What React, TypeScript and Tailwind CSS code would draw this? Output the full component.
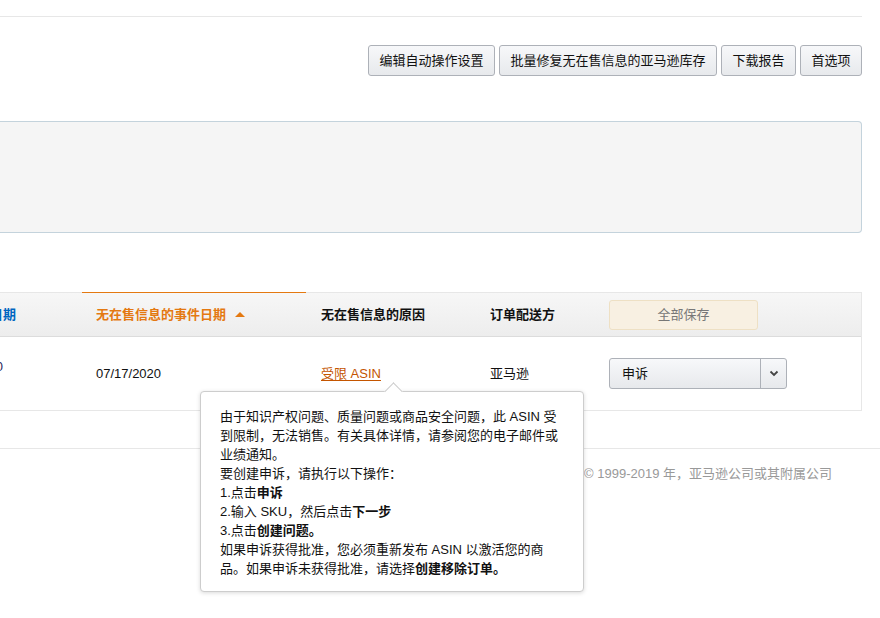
const FONT = "font-['Liberation_Sans','Noto_Sans_CJK_SC',sans-serif]";

const buttons = [
  { label: '编辑自动操作设置', w: 'w-[127px]' },
  { label: '批量修复无在售信息的亚马逊库存', w: 'w-[218px]' },
  { label: '下载报告', w: 'w-[75px]' },
  { label: '首选项', w: 'w-[62px]' },
];

function ActionButton({ label, w }: { label: string; w: string }) {
  return (
    <button className={`${w} h-[31px] rounded-[3px] border border-[#adb1b8] bg-gradient-to-b from-[#f7f8fa] to-[#e7e9ec] text-[13px] text-[#111] whitespace-nowrap`}>
      {label}
    </button>
  );
}

export default function App() {
  return (
    <div className={`relative w-[880px] h-[618px] overflow-hidden bg-white text-[13px] text-[#111] ${FONT}`}>
      <div className="w-[862px] pt-4">
        <div className="border-t border-[#e7e7e7]" />

        {/* toolbar */}
        <div className="mt-[28px] flex justify-end gap-[4px]">
          {buttons.map((b) => (
            <ActionButton key={b.label} label={b.label} w={b.w} />
          ))}
        </div>

        {/* empty filter panel */}
        <div className="mt-[45px] h-[112px] rounded-r-[4px] border border-l-0 border-[#c4d3dc] bg-[#f5f5f5]" />

        {/* table */}
        <div className="mt-[59px] border-r border-b border-[#e7e7e7]">
          <div className="flex h-[45px] border-b border-[#dcdcdc] bg-gradient-to-b from-[#f7f7f7] to-[#ededed] font-bold">
            <div className="w-[82px] shrink-0 flex items-center justify-end pr-[66px] whitespace-nowrap border-t border-[#e7e7e7] text-[#0066c0]">
              状态更改日期
            </div>
            <div className="w-[224px] shrink-0 flex items-center gap-[9px] pl-[14px] border-t border-[#e47911] text-[#e47911]">
              无在售信息的事件日期
              <span className="w-0 h-0 border-x-[5px] border-x-transparent border-b-[5px] border-b-[#e47911]" />
            </div>
            <div className="w-[169px] shrink-0 flex items-center pl-[15px] border-t border-[#e7e7e7]">
              无在售信息的原因
            </div>
            <div className="w-[120px] shrink-0 flex items-center pl-[15px] border-t border-[#e7e7e7]">
              订单配送方
            </div>
            <div className="flex-1 flex items-center pl-[14px] border-t border-[#e7e7e7]">
              <div className="w-[149px] h-[30px] flex items-center justify-center rounded-[3px] border border-[#eee0c4] bg-[#f8f0e2] font-normal text-[#777]">
                全部保存
              </div>
            </div>
          </div>

          <div className="flex h-[73px] items-center">
            <div className="w-[82px] shrink-0 flex justify-end pr-[79px] whitespace-nowrap text-[#2a1f5a] -mt-[14px]">
              1,000
            </div>
            <div className="w-[224px] shrink-0 pl-[14px]">07/17/2020</div>
            <div className="w-[169px] shrink-0 pl-[15px]">
              <span className="text-[#c45500] underline underline-offset-2">受限 ASIN</span>
            </div>
            <div className="w-[120px] shrink-0 pl-[15px]">亚马逊</div>
            <div className="flex-1 pl-[14px]">
              <div className="w-[178px] h-[31px] flex rounded-[3px] border border-[#adb1b8] bg-gradient-to-b from-[#f7f8fa] to-[#e7e9ec]">
                <div className="flex-1 flex items-center pl-[12px]">申诉</div>
                <div className="w-[26px] flex items-center justify-center border-l border-[#adb1b8]">
                  <svg width="10" height="7" viewBox="0 0 10 7">
                    <polyline points="1.5,1.5 5,5 8.5,1.5" fill="none" stroke="#444" strokeWidth="1.8" />
                  </svg>
                </div>
              </div>
            </div>
          </div>
        </div>
      </div>

      {/* footer */}
      <div className="mt-[37px] border-t border-[#e7e7e7] pt-[15px] pr-[48px] flex justify-end text-[#999]">
        © 1999-2019 年，亚马逊公司或其附属公司
      </div>

      {/* tooltip over the reason link */}
      <div className="absolute left-[200px] top-[391px] w-[384px] h-[201px] rounded-[4px] border border-[#cdcdcd] bg-white shadow-[0_1px_4px_rgba(0,0,0,0.15)] pt-[15px] pl-[19px] leading-[19px] text-[13px] text-[#111]">
        <span className="absolute -top-[7px] left-[186px] w-[13px] h-[13px] rotate-45 bg-white border-l border-t border-[#cdcdcd]" />
        <div>由于知识产权问题、质量问题或商品安全问题，此 ASIN 受</div>
        <div>到限制，无法销售。有关具体详情，请参阅您的电子邮件或</div>
        <div>业绩通知。</div>
        <div>要创建申诉，请执行以下操作：</div>
        <div>1.点击<b>申诉</b></div>
        <div>2.输入 SKU，然后点击<b>下一步</b></div>
        <div>3.点击<b>创建问题。</b></div>
        <div>如果申诉获得批准，您必须重新发布 ASIN 以激活您的商</div>
        <div>品。如果申诉未获得批准，请选择<b>创建移除订单。</b></div>
      </div>
    </div>
  );
}
